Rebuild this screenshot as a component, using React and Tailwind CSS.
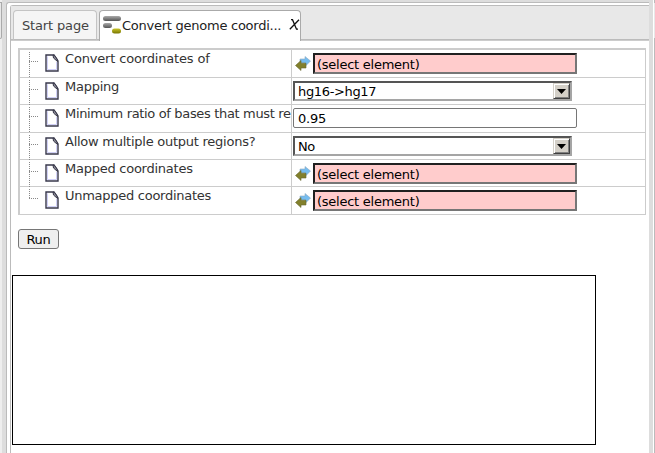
const PageIcon = () => (
  <svg width="14" height="18" viewBox="0 0 14 18" className="block">
    <path d="M1 1H9L13 7V17H1Z" fill="#fff" stroke="#38384c" strokeWidth="1.4" />
    <path d="M2.5 2.3V15.5H11.5V8" fill="none" stroke="#c4c4f4" strokeWidth=".8" />
    <path d="M8 1L8.5 4L12.5 7.5L12 5L9.5 1.5Z" fill="#8a8a98" stroke="#363646" strokeWidth="1" />
  </svg>
);

const Arrows = () => (
  <svg width="16" height="15" viewBox="0 0 16 15" className="block">
    <path d="M5 3H10V0.5L15.5 5L10.5 10V7H5Z" fill="#76bdf0" stroke="#8baac1" strokeWidth=".6" />
    <path d="M.5 9.5L6 4.5V7.2H11V12H6V14.5Z" fill="#82802c" stroke="#66672f" strokeWidth=".6" />
  </svg>
);

const Branch = ({ last }) => (
  <svg width="10" height="26" viewBox="0 0 10 26" className="block" shapeRendering="crispEdges">
    <path d={last ? "M.5 1V11" : "M.5 1V26"} stroke="#888" strokeDasharray="1 1" />
    <path d="M0 10.5H10" stroke="#888" strokeDasharray="1 1" />
  </svg>
);

const Element = () => (
  <div className="flex pt-[3px] pl-[3px]">
    <div className="w-[18px] pt-[3px]"><Arrows /></div>
    <div className="h-[21px] w-[264px] border-2 border-t-[#202020] border-l-[#202020] border-r-[#767676] border-b-[#767676] bg-[#ffcccc] pl-[2px] leading-[19px]">(select element)</div>
  </div>
);

const Select = ({ children }) => (
  <div className="mt-[3px] ml-[1px] flex h-[20px] w-[279px] justify-between border-2 border-t-[#555] border-l-[#555] border-r-[#a5a5a5] border-b-[#a5a5a5] bg-white pl-[3px]">
    <span className="leading-[18px] tracking-[-0.35px]">{children}</span>
    <div className="flex h-[16px] w-[17px] items-center justify-center border border-t-[#d4d0c8] border-l-[#d4d0c8] border-r-[#404040] border-b-[#404040] bg-[#d4d0c8] shadow-[inset_1px_1px_#fff,inset_-1px_-1px_#808080]">
      <svg width="9" height="5" viewBox="0 0 9 5"><path d="M0 0H9L4.5 5Z" fill="#000" /></svg>
    </div>
  </div>
);

const rows = [
  { label: "Convert coordinates of", height: "h-[28px]", spacing: "tracking-[-0.17px]", field: <Element /> },
  { label: "Mapping", height: "h-[27px]", spacing: "tracking-[-0.25px]", field: <Select>hg16-&gt;hg17</Select> },
  {
    label: "Minimum ratio of bases that must re", height: "h-[28px]", spacing: "tracking-[-0.34px]",
    field: <div className="mt-[3px] ml-[1px] h-[20px] w-[284px] rounded-[2px] border border-[#767676] pl-[4px] leading-[20px]">0.95</div>,
  },
  { label: "Allow multiple output regions?", height: "h-[27px]", spacing: "tracking-[-0.25px]", field: <Select>No</Select> },
  { label: "Mapped coordinates", height: "h-[27px]", spacing: "tracking-[-0.25px]", field: <Element /> },
  { label: "Unmapped coordinates", height: "h-[28px]", spacing: "tracking-[-0.27px]", field: <Element />, last: true },
];

export default function App() {
  return (
    <div className="flex h-[453px] w-[655px] overflow-hidden bg-[#ddd] font-['DejaVu_Sans',sans-serif] text-[13px] tracking-[-0.25px] whitespace-nowrap text-black">
      <div className="w-[2px] shrink-0 bg-[#eee] pt-[2px]">
        <div className="h-[37px] rounded-br-[3px] border-t border-r border-b border-[#aaa] bg-[#e8e8e8]" />
      </div>
      <div className="w-[4px] shrink-0" />
      <div className="flex w-[643px] shrink-0 flex-col pt-[2px]">
        <div className="flex grow flex-col rounded-tl-[3px] border-t border-l border-[#bbb] bg-white pt-[2px] pl-[3px]">
          <div className="flex grow flex-col rounded-tl-[3px] border-t border-l border-[#bbb]">
            <div className="flex h-[35px] items-start border-b border-[#ccc] bg-[#e8e8e8] pt-[4px] pl-[2px] shadow-[inset_0_-1px_#bbb]">
              <div className="h-[30px] w-[84px] rounded-t-[4px] border border-[#c4c4c4] border-b-[#bbb] bg-[#f5f5f5] pl-[8px] leading-[30px] tracking-[-0.15px] text-[#444]">Start page</div>
              <div className="relative ml-[2px] flex h-[31px] w-[202px] rounded-t-[4px] border border-b-0 border-[#aaa] bg-white pl-[3px]">
                <svg width="19" height="20" viewBox="0 0 19 20" className="mt-[4px]">
                  <defs>
                    <linearGradient id="gray" x2="0" y2="1"><stop stopColor="#aaa" /><stop offset="1" stopColor="#555" /></linearGradient>
                    <linearGradient id="gold" x2="0" y2="1"><stop stopColor="#c8c42a" /><stop offset="1" stopColor="#777500" /></linearGradient>
                  </defs>
                  <rect y="1" width="18" height="5" rx="2.5" fill="url(#gray)" />
                  <rect y="8" width="9" height="5" rx="2.5" fill="url(#gray)" />
                  <rect x="9" y="13.5" width="9" height="5" rx="2.5" fill="url(#gold)" />
                </svg>
                <span className="leading-[30px] text-[#222]">Convert genome coordi...</span>
                <svg width="11" height="11" viewBox="0 0 11 11" className="absolute top-[8px] right-0">
                  <path d="M2 .7H3.5L7.5 10.2H9M10 .7L.8 10.2" fill="none" stroke="#111" strokeWidth="1.3" />
                </svg>
              </div>
            </div>
            <div className="mt-[7px] ml-[7px] w-[628px] border-t-2 border-r border-l-2 border-[#ccc]">
              {rows.map((row) => (
                <div key={row.label} className={`flex border-b border-[#ccc] ${row.height}`}>
                  <div className="flex w-[272px] border-r border-[#ccc] pl-[9px] text-[#333]">
                    <div className="w-[16px] shrink-0 pt-px"><Branch last={row.last} /></div>
                    <div className="w-[20px] shrink-0 pt-[4px]"><PageIcon /></div>
                    <span className={`leading-[17px] ${row.spacing}`}>{row.label}</span>
                  </div>
                  <div>{row.field}</div>
                </div>
              ))}
            </div>
            <div className="mt-[14px] ml-[7px] h-[20px] w-[41px] rounded-[3px] border border-[#767676] bg-[#efefef] text-center leading-[19px]">Run</div>
            <div className="mt-[26px] ml-[1px] h-[170px] w-[584px] border border-black" />
          </div>
        </div>
      </div>
      <div className="w-[4px] shrink-0" />
      <div className="flex w-[2px] shrink-0 flex-col border-l border-white bg-[#bbb]">
        <div className="mt-[3px] h-[35px] bg-[#e8e8e8]" />
      </div>
    </div>
  );
}
